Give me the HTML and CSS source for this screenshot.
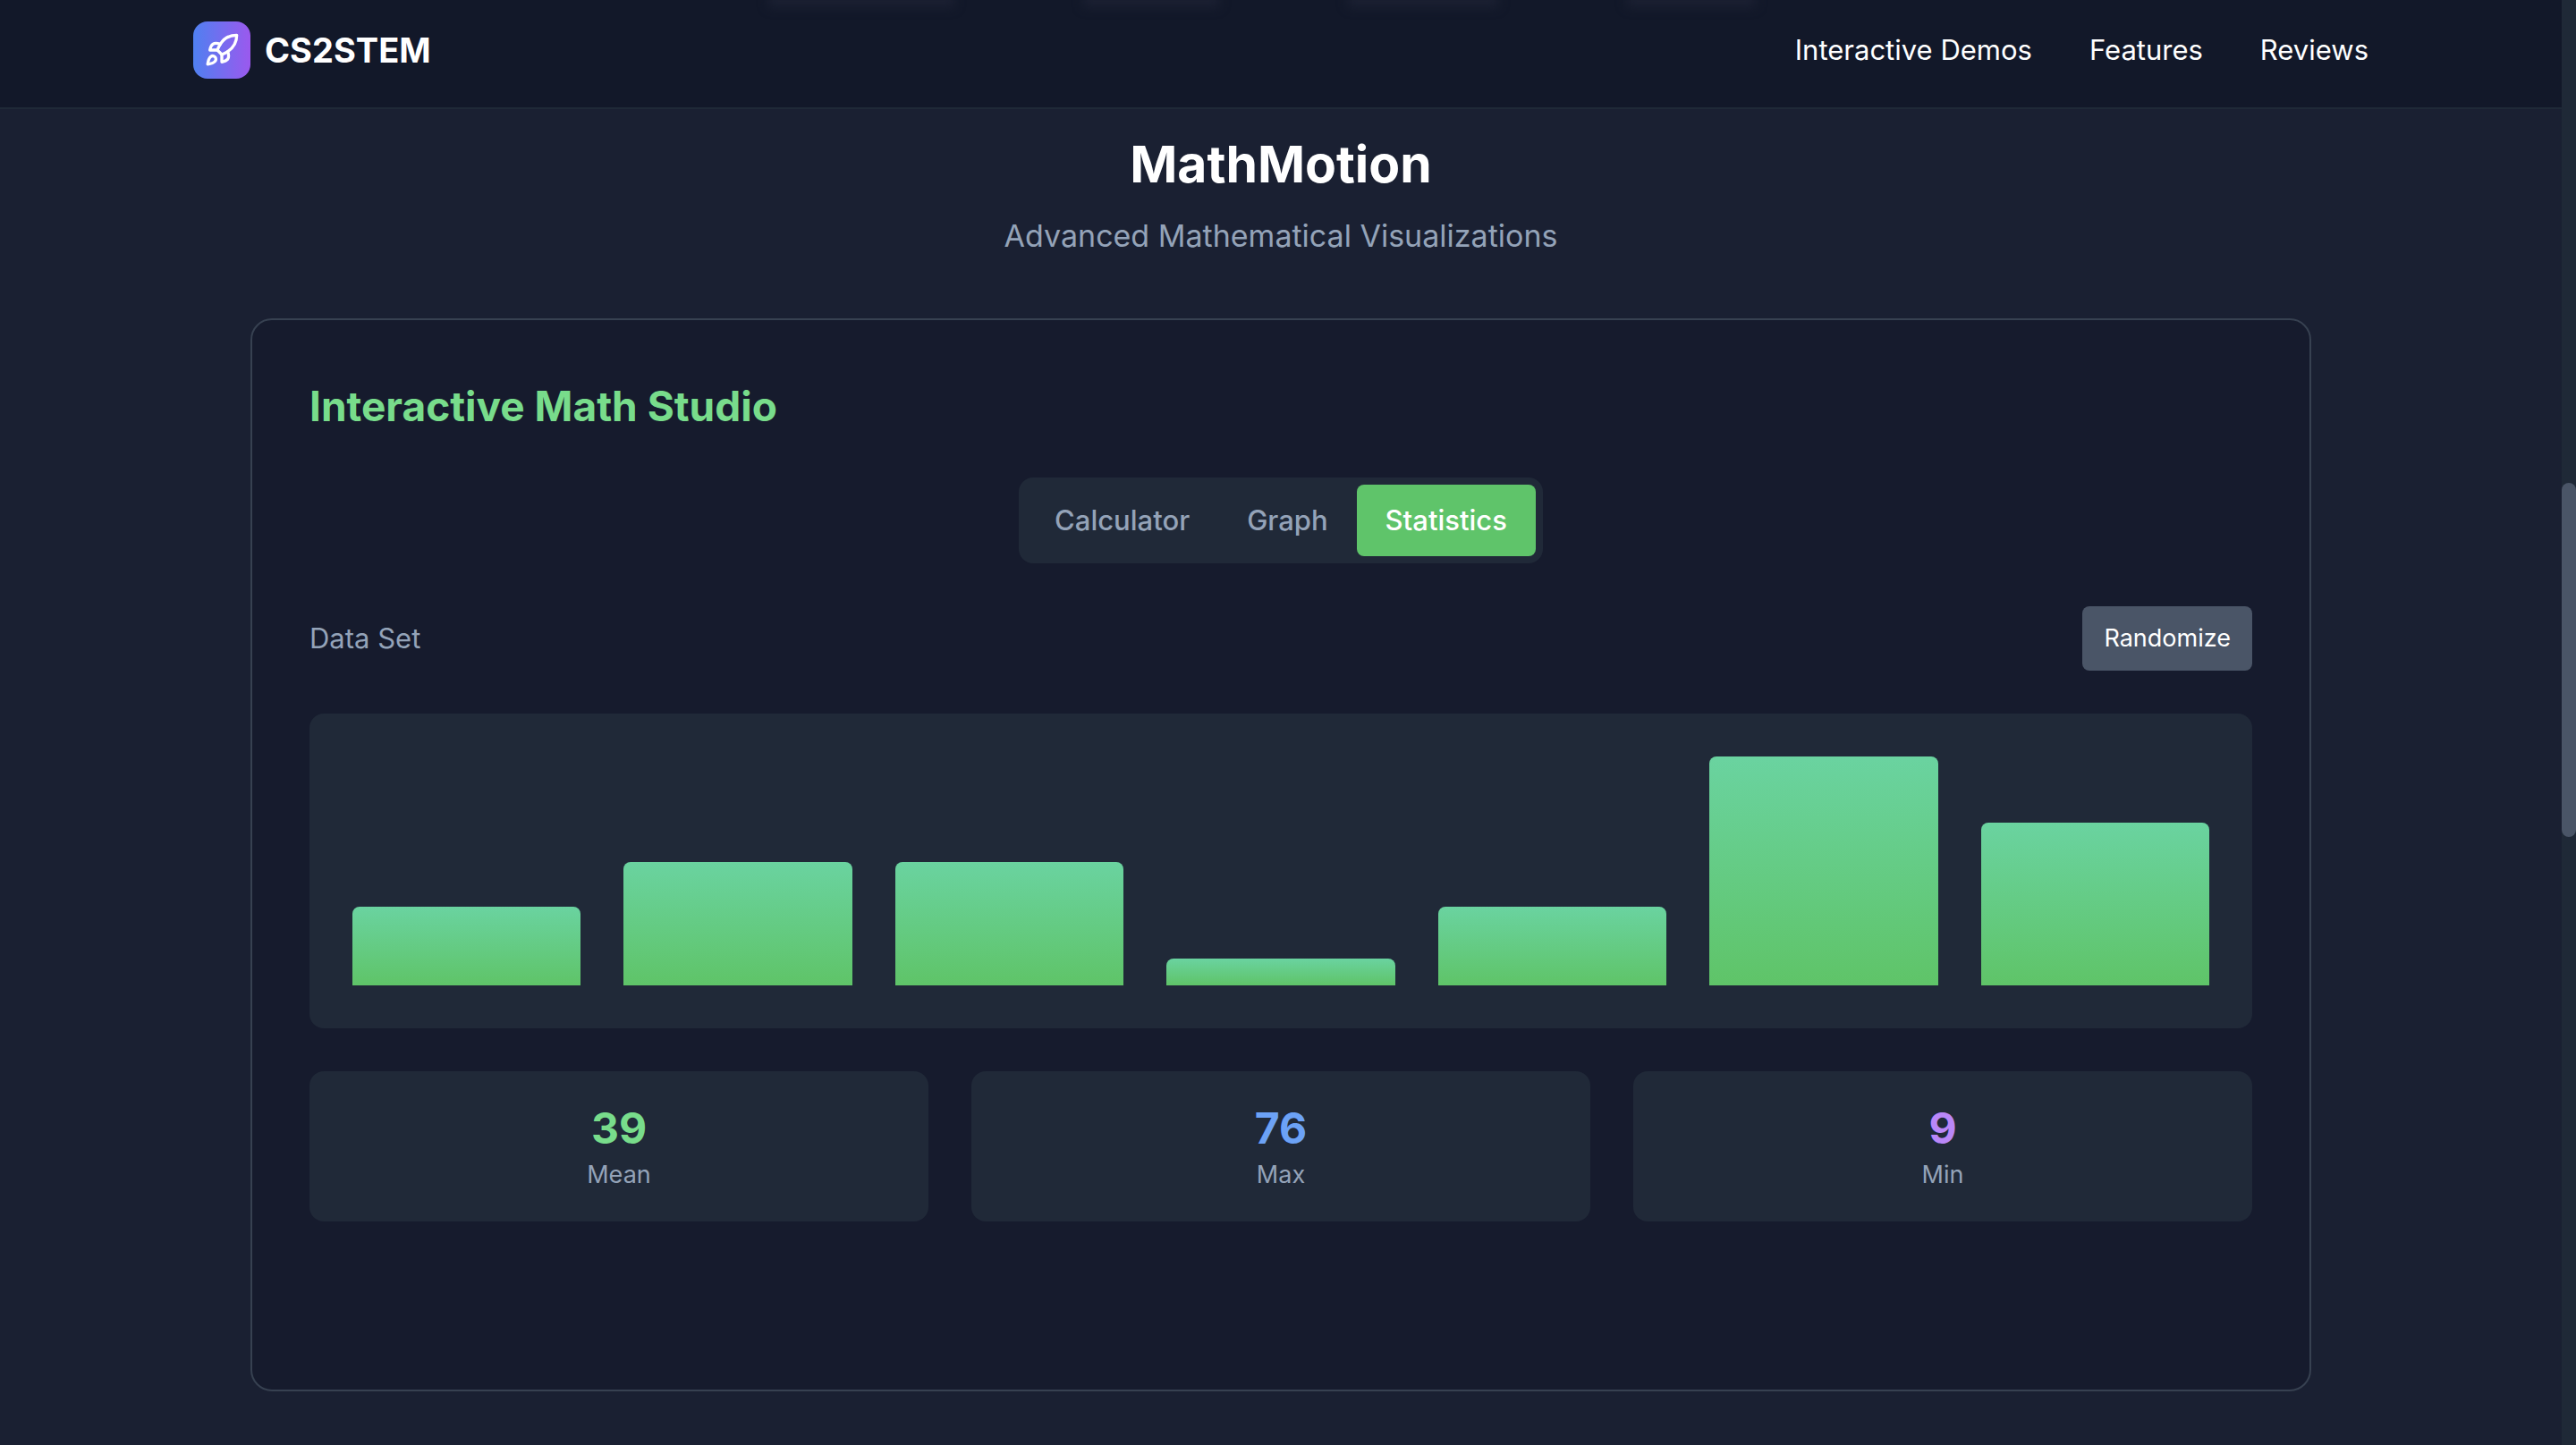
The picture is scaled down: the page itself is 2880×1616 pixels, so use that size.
FILE: index.html
```html
<!DOCTYPE html>
<html lang="en">
<head>
<meta charset="utf-8">
<title>CS2STEM</title>
<link rel="stylesheet" href="styles.css">
</head>
<body>
<div class="page">
  <header class="site-header">
    <div class="glow" aria-hidden="true"><span></span><span></span><span></span><span></span></div>
    <div class="brand">
      <span class="brand-mark">
        <svg viewBox="0 0 24 24" width="40" height="40" fill="none" stroke="currentColor" stroke-width="2" stroke-linecap="round" stroke-linejoin="round" aria-hidden="true">
          <path d="M4.5 16.5c-1.5 1.26-2 5-2 5s3.74-.5 5-2c.71-.84.7-2.13-.09-2.91a2.18 2.18 0 0 0-2.91-.09z"/>
          <path d="m12 15-3-3a22 22 0 0 1 2-3.95A12.88 12.88 0 0 1 22 2c0 2.72-.78 7.5-6 11a22.35 22.35 0 0 1-4 2z"/>
          <path d="M9 12H4s.55-3.03 2-4c1.62-1.08 5 0 5 0"/>
          <path d="M12 15v5s3.03-.55 4-2c1.08-1.62 0-5 0-5"/>
        </svg>
      </span>
      <span class="brand-name">CS2STEM</span>
    </div>
    <nav class="site-nav">
      <a href="#demos">Interactive Demos</a>
      <a href="#features">Features</a>
      <a href="#reviews">Reviews</a>
    </nav>
  </header>
  <main class="demo" id="demos">
    <h2 class="demo-title">MathMotion</h2>
    <p class="demo-subtitle">Advanced Mathematical Visualizations</p>
    <section class="studio">
      <h3 class="studio-title">Interactive Math Studio</h3>
      <div class="tabs">
        <button type="button" class="tab">Calculator</button>
        <button type="button" class="tab">Graph</button>
        <button type="button" class="tab tab-active">Statistics</button>
      </div>
      <div class="toolbar">
        <span class="toolbar-label">Data Set</span>
        <button type="button" class="randomize">Randomize</button>
      </div>
      <div class="chart">
        <div class="bar" style="height: 34.2%"></div>
        <div class="bar" style="height: 53.9%"></div>
        <div class="bar" style="height: 53.9%"></div>
        <div class="bar" style="height: 11.8%"></div>
        <div class="bar" style="height: 34.2%"></div>
        <div class="bar" style="height: 100%"></div>
        <div class="bar" style="height: 71.1%"></div>
      </div>
      <div class="stats">
        <div class="stat"><div class="stat-value mean">39</div><div class="stat-label">Mean</div></div>
        <div class="stat"><div class="stat-value max">76</div><div class="stat-label">Max</div></div>
        <div class="stat"><div class="stat-value min">9</div><div class="stat-label">Min</div></div>
      </div>
    </section>
  </main>
</div>
<div class="scroll-track" aria-hidden="true"><div class="scroll-thumb"></div></div>
</body>
</html>
```
FILE: styles.css
```css
* {
  box-sizing: border-box;
}

body {
  margin: 0;
  min-height: 100vh;
  display: grid;
  grid-template-columns: 1fr 16px;
  background: #1a2032;
  color: #ffffff;
  font-family: Inter, "Liberation Sans", sans-serif;
  font-size: 31px;
  line-height: 48px;
}

h2, h3, p {
  margin: 0;
}

button {
  border: 0;
  font-family: inherit;
  cursor: pointer;
}

/* Header */
.site-header {
  position: sticky;
  top: 0;
  display: flex;
  justify-content: space-between;
  align-items: center;
  padding: 24px calc((100% - 2432px) / 2) 32px;
  background: #121829;
  border-bottom: 2px solid #1f2937;
  overflow: hidden;
}

.glow {
  position: absolute;
  top: -8px;
  left: 30%;
  display: grid;
  grid-template-columns: 208px 152px 168px 144px;
  gap: 144px;
  filter: blur(6px);
}

.glow span {
  height: 16px;
  background: #1b2032;
}

.brand {
  display: flex;
  align-items: center;
  gap: 16px;
}

.brand-mark {
  display: flex;
  align-items: center;
  justify-content: center;
  width: 64px;
  height: 64px;
  border-radius: 16px;
  background: linear-gradient(to right, #4f80f0, #9b59ee);
}

.brand-name {
  font-size: 38px;
  font-weight: 700;
}

.site-nav {
  display: flex;
  gap: 64px;
}

.site-nav a {
  color: #ffffff;
  text-decoration: none;
}

/* Demo section */
.demo {
  max-width: 2304px;
  margin: 0 auto;
  padding: 26px 0 60px;
}

.demo-title {
  font-size: 57px;
  line-height: 72px;
  text-align: center;
}

.demo-subtitle {
  margin: 16px 0 64px;
  font-size: 34px;
  line-height: 56px;
  text-align: center;
  color: #94a3b8;
}

.studio {
  min-height: 1200px;
  padding: 64px;
  display: flex;
  flex-direction: column;
  gap: 48px;
  background: #161b2d;
  border: 2px solid #374151;
  border-radius: 24px;
}

.studio-title {
  font-size: 46px;
  line-height: 64px;
  color: #78dc8b;
}

.tabs {
  align-self: center;
  display: flex;
  padding: 8px;
  border-radius: 16px;
  background: #202938;
}

.tab {
  padding: 16px 32px;
  border-radius: 8px;
  background: transparent;
  color: #94a3b8;
  font-size: 31px;
  font-weight: 500;
  line-height: 48px;
}

.tab-active {
  background: #5fc46a;
  color: #ffffff;
}

.toolbar {
  display: flex;
  align-items: center;
  justify-content: space-between;
}

.toolbar-label {
  color: #94a3b8;
}

.randomize {
  padding: 16px 24px;
  border-radius: 8px;
  background: #4a5567;
  color: #ffffff;
  font-size: 27px;
  line-height: 40px;
}

.chart {
  display: flex;
  align-items: flex-end;
  gap: 48px;
  height: 352px;
  padding: 48px;
  border-radius: 16px;
  background: #202938;
}

.bar {
  flex: 1;
  border-radius: 8px 8px 0 0;
  background: linear-gradient(to top, #5fc468, #6ad3a0);
}

.stats {
  display: grid;
  grid-template-columns: repeat(3, 1fr);
  gap: 48px;
}

.stat {
  padding: 32px;
  border-radius: 16px;
  background: #202938;
  text-align: center;
}

.stat-value {
  font-size: 48px;
  font-weight: 700;
  line-height: 64px;
}

.mean {
  color: #78dc8b;
}

.max {
  color: #6ca2f6;
}

.min {
  color: #b987f8;
}

.stat-label {
  color: #94a3b8;
  font-size: 27px;
  line-height: 40px;
}

/* Scrollbar */
.scroll-track {
  position: relative;
  background: #1f2937;
}

.scroll-thumb {
  position: absolute;
  top: 540px;
  width: 100%;
  height: 396px;
  border-radius: 8px;
  background: #4a5567;
}
```
